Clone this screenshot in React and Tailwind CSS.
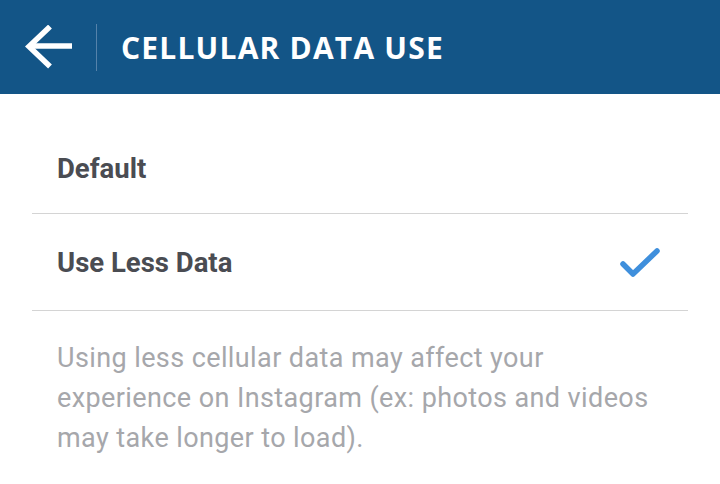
export default function App() {
  return (
    <div className="w-[720px] h-[484px] bg-white overflow-hidden" style={{ fontFamily: "Roboto, sans-serif" }}>
      <div className="h-[94px] bg-[#135587] flex items-center">
        <div className="w-[96px] h-full flex items-center pl-[24px]">
          <svg width="52" height="44" viewBox="0 0 52 44" fill="none" stroke="white" strokeWidth="5.5">
            <path d="M48 21H5" />
            <path d="M24 3.5L5 21.5L24 39.5" strokeLinecap="square" strokeLinejoin="miter" />
          </svg>
        </div>
        <div className="w-px h-[47px] bg-[#5582aa]" />
        <div className="pl-[24px] text-white text-[30px] font-bold tracking-[1.2px]" style={{ fontFamily: "'Open Sans', sans-serif" }}>
          CELLULAR DATA USE
        </div>
      </div>
      <div className="px-[32px]">
        <div className="h-[120px] flex items-center pt-[30px] border-b border-[#d4d4d4]">
          <span className="pl-[25px] text-[27.5px] font-bold text-[#4a4c52]">Default</span>
        </div>
        <div className="h-[97px] flex items-center justify-between pt-[2px] border-b border-[#d4d4d4]">
          <span className="pl-[25px] text-[27.5px] font-bold text-[#4a4c52]">Use Less Data</span>
          <svg className="mr-[28px]" width="40" height="30" viewBox="0 0 40 30" fill="none" stroke="#3f8fdc" strokeWidth="5.5" strokeLinecap="round" strokeLinejoin="round">
            <path d="M3 16L13 26L37 3" />
          </svg>
        </div>
        <p className="pl-[25px] pt-[27px] text-[27px] leading-[40px] tracking-[0.4px] text-[#a6a7ab] whitespace-nowrap">
          Using less cellular data may affect your
          <br />
          experience on Instagram (ex: photos and videos
          <br />
          may take longer to load).
        </p>
      </div>
    </div>
  );
}
